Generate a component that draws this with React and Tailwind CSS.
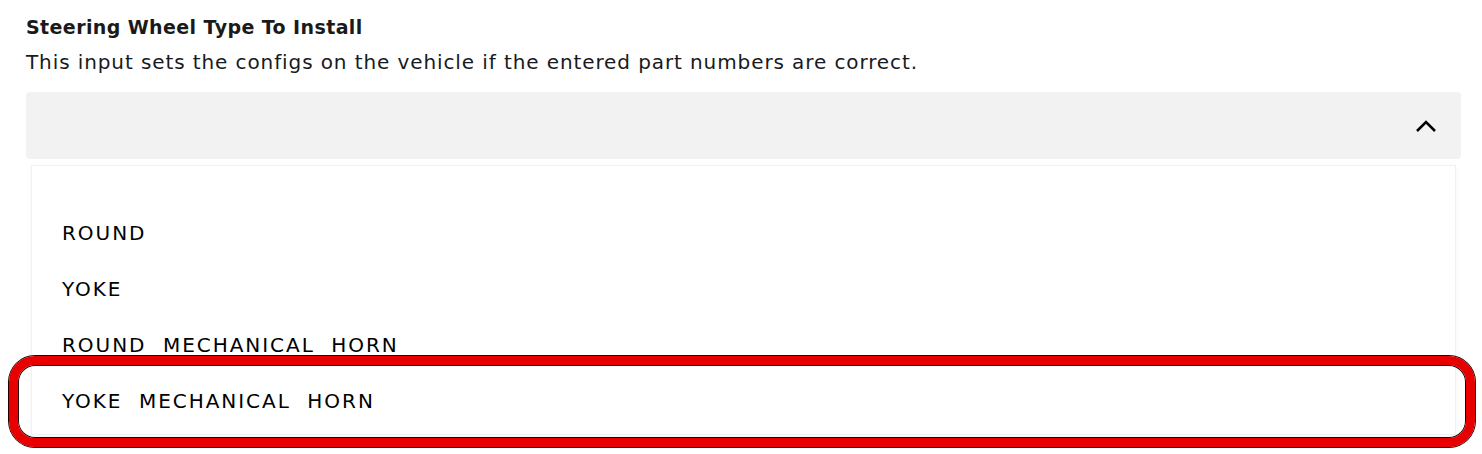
import React from "react";

const items = ["ROUND", "YOKE", "ROUND\u00a0 MECHANICAL\u00a0 HORN", "YOKE\u00a0 MECHANICAL\u00a0 HORN"];

export default function App() {
  return (
    <div className="relative w-[1482px] h-[454px] bg-white overflow-hidden text-black" style={{ fontFamily: '"DejaVu Sans", sans-serif' }}>
      <div className="pl-[26px] pr-[21px] pt-[15px]">
        <div className="text-[19px] leading-[24px] font-semibold tracking-[0.4px] text-[#1a1a1a]">Steering Wheel Type To Install</div>
        <div className="text-[20px] leading-[24px] mt-[11px] tracking-[0.9px] text-[#171a20]">This input sets the configs on the vehicle if the entered part numbers are correct.</div>
        <div className="mt-[18px] h-[67px] rounded-[4px] bg-[#f2f2f2] flex items-center justify-end pr-[24px]">
          <svg width="22" height="14" viewBox="0 0 22 14" fill="none">
            <path d="M2 12 L11 3 L20 12" stroke="#000" strokeWidth="2.6" />
          </svg>
        </div>
        <div className="mx-[5px] mt-[6px] h-[270px] bg-white border border-[#eef2f2] shadow-[0_2px_6px_rgba(0,0,0,0.04)] pt-[39px] flex flex-col">
          {items.map((t) => (
            <div key={t} className="h-[56px] flex items-center pl-[30px] text-[20px] tracking-[1.95px] text-black">
              {t}
            </div>
          ))}
        </div>
      </div>
      <div className="absolute left-[9px] top-[356px] w-[1466px] h-[91px] rounded-[26px] border-[9px] border-[#e80000] shadow-[0_0_0_1px_#200,inset_0_0_0_1px_#200]"></div>
    </div>
  );
}
